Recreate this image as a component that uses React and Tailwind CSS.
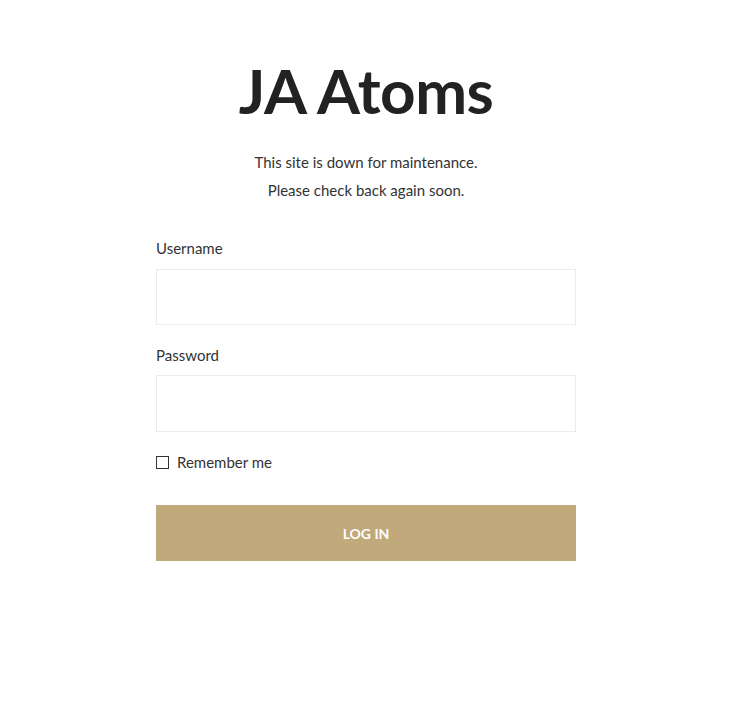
export default function App() {
  return (
    <div className="min-h-[715px] bg-white text-[#222] font-['Lato',sans-serif]">
      <div className="w-[732px]">
        <div className="mx-auto w-[420px] pt-[52px]">
          <h1 className="text-center text-[62px] leading-[76px] font-bold tracking-[-0.5px] text-[#222]">JA Atoms</h1>
          <div className="mt-[20px] text-center text-[15px] leading-[28px] text-[#333]">
            <p>This site is down for maintenance.</p>
            <p>Please check back again soon.</p>
          </div>
          <form className="mt-[32px]">
            <label className="block text-[15px] leading-[24px] text-[#333]">Username</label>
            <input type="text" className="mt-[9px] block h-[56px] w-full border border-[#ebebeb] bg-white outline-none" />
            <label className="mt-[18px] block text-[15px] leading-[24px] text-[#333]">Password</label>
            <input type="password" className="mt-[8px] block h-[57px] w-full border border-[#ebebeb] bg-white outline-none" />
            <div className="mt-[18px] flex items-center gap-[8px]">
              <span className="block h-[13px] w-[13px] border border-[#333] bg-white"></span>
              <span className="text-[15px] leading-[24px] text-[#333]">Remember me</span>
            </div>
            <button type="button" className="mt-[31px] block h-[56px] w-full bg-[#c0a97a] text-[14px] font-bold uppercase text-white">Log in</button>
          </form>
        </div>
      </div>
    </div>
  );
}
